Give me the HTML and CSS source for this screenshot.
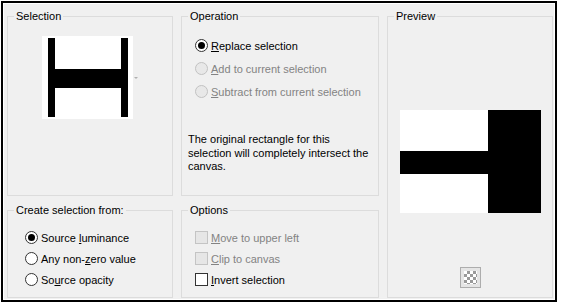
FILE: index.html
```html
<!DOCTYPE html>
<html lang="en">
<head>
  <meta charset="UTF-8" />
  <title>Selection from mask</title>
  <link rel="stylesheet" href="styles.css">
</head>
<body>
  <div class="dialog">

    <fieldset class="group sel">
      <legend>Selection</legend>
      <div class="sel-pick">
        <svg class="sel-img" width="91" height="83" viewBox="0 0 91 83">
          <rect width="91" height="83" fill="#fff"/>
          <rect x="6" y="2" width="7" height="79" fill="#000"/>
          <rect x="79" y="2" width="7" height="79" fill="#000"/>
          <rect x="13" y="33" width="66" height="19" fill="#000"/>
        </svg>
        <span class="drop"></span>
      </div>
    </fieldset>

    <fieldset class="group op">
      <legend>Operation</legend>
      <div class="rows rows-op">
        <label class="opt"><span class="radio on"></span><span><u>R</u>eplace selection</span></label>
        <label class="opt off"><span class="radio"></span><span><u>A</u>dd to current selection</span></label>
        <label class="opt off"><span class="radio"></span><span><u>S</u>ubtract from current selection</span></label>
      </div>
      <p class="note">The original rectangle for this selection will completely intersect the canvas.</p>
    </fieldset>

    <fieldset class="group preview">
      <legend>Preview</legend>
      <svg class="prev-img" width="141" height="103" viewBox="0 0 141 103">
        <rect width="141" height="103" fill="#fff"/>
        <rect x="88" y="0" width="53" height="103" fill="#000"/>
        <rect x="0" y="41" width="88" height="23" fill="#000"/>
      </svg>
      <div class="checker-btn"><span class="checker"></span></div>
    </fieldset>

    <fieldset class="group from">
      <legend>Create selection from:</legend>
      <div class="rows rows-small rows-from">
        <label class="opt"><span class="radio on"></span><span>Source <u>l</u>uminance</span></label>
        <label class="opt"><span class="radio"></span><span>Any non-<u>z</u>ero value</span></label>
        <label class="opt"><span class="radio"></span><span>So<u>u</u>rce opacity</span></label>
      </div>
    </fieldset>

    <fieldset class="group opts">
      <legend>Options</legend>
      <div class="rows rows-small rows-opts">
        <label class="opt off"><span class="check"></span><span><u>M</u>ove to upper left</span></label>
        <label class="opt off"><span class="check"></span><span><u>C</u>lip to canvas</span></label>
        <label class="opt"><span class="check"></span><span><u>I</u>nvert selection</span></label>
      </div>
    </fieldset>

  </div>
</body>
</html>
```

FILE: styles.css
```css
body {
  margin: 0;
  background: #ffffff;
  font-family: "Liberation Sans", Arial, sans-serif;
  font-size: 11px;
  color: #000000;
}

.dialog {
  box-sizing: border-box;
  margin: 1px;
  width: 556px;
  height: 301px;
  border: 2px solid #000;
  box-shadow: inset 0 0 0 1px #fff;
  background: #f0f0f0;
  padding: 6px 0 0 4px;
  display: grid;
  grid-template-columns: 166px 198px 166px;
  grid-template-rows: 187px 95px;
  column-gap: 8px;
  row-gap: 7px;
}

.group {
  margin: 0;
  padding: 0;
  min-width: 0;
  border: 1px solid #dcdcdc;
}

.group legend {
  margin-left: 6px;
  padding: 0 2px;
  line-height: 14px;
}

.sel { grid-column: 1; grid-row: 1; }
.op { grid-column: 2; grid-row: 1; }
.preview { grid-column: 3; grid-row: 1 / 3; }
.from { grid-column: 1; grid-row: 2; }
.opts { grid-column: 2; grid-row: 2; }

/* selection thumbnail */
.sel-pick {
  display: flex;
  align-items: center;
  padding: 13px 0 0 34px;
}

.sel-img {
  display: block;
}

.drop {
  margin-left: 1px;
  width: 0;
  height: 0;
  border-left: 2px solid transparent;
  border-right: 2px solid transparent;
  border-top: 2px solid #b0b0b0;
}

/* radio / checkbox rows */
.rows {
  display: flex;
  flex-direction: column;
}

.rows-op {
  padding: 11px 0 0 13px;
}

.rows-op .opt {
  height: 23px;
}

.rows-small .opt {
  height: 21px;
}

.rows-from {
  padding: 10px 0 0 17px;
}

.rows-opts {
  padding: 10px 0 0 13px;
}

.opt {
  display: flex;
  align-items: center;
  gap: 3px;
  white-space: nowrap;
}

.opt.off {
  color: #838383;
}

.radio {
  box-sizing: border-box;
  width: 13px;
  height: 13px;
  border-radius: 50%;
  border: 1px solid #333;
  background: #fff;
  display: flex;
  align-items: center;
  justify-content: center;
}

.radio.on::after {
  content: "";
  width: 7px;
  height: 7px;
  border-radius: 50%;
  background: #000;
}

.off .radio {
  border-color: #c2c2c2;
  background: #e8e8e8;
}

.check {
  box-sizing: border-box;
  width: 13px;
  height: 13px;
  border: 1px solid #333;
  background: #fff;
}

.off .check {
  border-color: #c4c4c4;
  background: #e6e6e6;
}

.note {
  margin: 30px 5px 0 6px;
  line-height: 13.5px;
}

/* preview */
.preview {
  display: flex;
  flex-direction: column;
  align-items: center;
}

.prev-img {
  display: block;
  margin-top: 87px;
}

.checker-btn {
  box-sizing: border-box;
  margin-top: 54px;
  width: 21px;
  height: 21px;
  border: 1px solid #adadad;
  background: #e5e5e5;
  padding: 3px;
}

.checker {
  display: block;
  width: 13px;
  height: 13px;
  background: repeating-conic-gradient(#9a9a9a 0 25%, #ffffff 0 50%) 0 0 / 6px 6px;
}
```
